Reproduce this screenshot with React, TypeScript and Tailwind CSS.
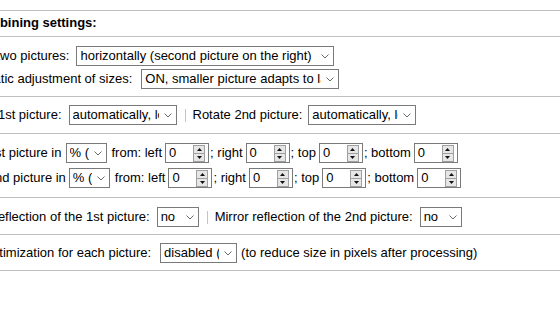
import React from "react";

const Chevron = () => (
  <svg width="8" height="5" viewBox="0 0 8 5" className="block">
    <path d="M0.5 0.5 L4 4 L7.5 0.5" stroke="#6b6b6b" fill="none" strokeWidth="1" />
  </svg>
);

function Sel({ cls, text }: { cls: string; text: string }) {
  return (
    <div
      className={`flex h-[20px] shrink-0 items-center border border-[#7a7a7a] bg-white pl-[3px] ${cls}`}
    >
      <span className="mr-[3px] min-w-0 flex-1 overflow-hidden whitespace-nowrap leading-[18px]">{text}</span>
      <span className="flex w-[14px] shrink-0 justify-center pr-[2px]">
        <Chevron />
      </span>
    </div>
  );
}

function Spin({ cls }: { cls: string }) {
  return (
    <div
      className={`flex h-[20px] w-[44px] shrink-0 items-center border border-[#7a7a7a] bg-white pl-[3px] ${cls}`}
    >
      <span className="flex-1 leading-[18px]">0</span>
      <div className="mr-[3px] flex h-[17px] w-[12px] flex-col border border-[#a0a0a0] bg-[#e6e6e6]">
        <div className="flex flex-1 items-center justify-center">
          <svg width="5" height="3" viewBox="0 0 5 3" className="block">
            <polygon points="0,3 2.5,0 5,3" fill="#111" />
          </svg>
        </div>
        <div className="h-px bg-[#a0a0a0]" />
        <div className="flex flex-1 items-center justify-center">
          <svg width="5" height="3" viewBox="0 0 5 3" className="block">
            <polygon points="0,0 5,0 2.5,3" fill="#111" />
          </svg>
        </div>
      </div>
    </div>
  );
}

const Sep = ({ cls }: { cls: string }) => (
  <div className={`h-[13px] w-px shrink-0 bg-[#c4c4c4] ${cls}`} />
);

export default function App() {
  return (
    <div className="h-[309px] w-[560px] overflow-hidden bg-white pt-[10px] font-['Liberation_Sans',Arial,sans-serif] text-[13px] text-black">
      {/* header */}
      <div className="flex h-[26px] items-center border-t border-[#c0c0c0] pb-[2px]">
        <div className="-ml-[29px] whitespace-nowrap font-bold">Combining settings:</div>
      </div>

      {/* arrangement */}
      <div className="flex flex-col gap-[3px] border-t border-[#c0c0c0] pb-[7px] pt-[9px]">
        <div className="-ml-[44px] flex h-[20px] items-center whitespace-nowrap">
          <span>Merge two pictures:</span>
          <Sel cls="ml-[7px] w-[258px]" text="horizontally (second picture on the right)" />
        </div>
        <div className="-ml-[44px] flex h-[20px] items-center whitespace-nowrap">
          <span>Automatic adjustment of sizes:</span>
          <Sel cls="ml-[9px] w-[198px]" text="ON, smaller picture adapts to larger" />
        </div>
      </div>

      {/* rotate */}
      <div className="border-t border-[#c0c0c0] pb-[8px] pt-[8px]">
        <div className="-ml-[44px] flex h-[20px] items-center whitespace-nowrap">
          <span>Rotate 1st picture:</span>
          <Sel cls="ml-[7px] w-[108px]" text="automatically, lossless" />
          <Sep cls="ml-[8px] mr-[7px]" />
          <span>Rotate 2nd picture:</span>
          <Sel cls="ml-[6px] w-[108px]" text="automatically, lossless" />
        </div>
      </div>

      {/* crop */}
      <div className="flex flex-col gap-[5px] border-t border-[#c0c0c0] pb-[9px] pt-[9px]">
        <div className="-ml-[44px] flex h-[20px] items-center whitespace-nowrap">
          <span>Crop 1st picture in</span>
          <Sel cls="ml-[4px] w-[41px]" text="% (percent)" />
          <span className="ml-[5px]">from: left</span>
          <Spin cls="ml-[3px]" />
          <span className="ml-[1px]">; right</span>
          <Spin cls="ml-[3px]" />
          <span className="ml-[1px]">; top</span>
          <Spin cls="ml-[3px]" />
          <span className="ml-[1px]">; bottom</span>
          <Spin cls="ml-[3px]" />
        </div>
        <div className="-ml-[44px] flex h-[20px] items-center whitespace-nowrap">
          <span>Crop 2nd picture in</span>
          <Sel cls="ml-[3px] w-[41px]" text="% (percent)" />
          <span className="ml-[5px]">from: left</span>
          <Spin cls="ml-[3px]" />
          <span className="ml-[1px]">; right</span>
          <Spin cls="ml-[3px]" />
          <span className="ml-[1px]">; top</span>
          <Spin cls="ml-[3px]" />
          <span className="ml-[1px]">; bottom</span>
          <Spin cls="ml-[3px]" />
        </div>
      </div>

      {/* mirror */}
      <div className="border-t border-[#c0c0c0] pb-[7px] pt-[9px]">
        <div className="-ml-[44px] flex h-[20px] items-center whitespace-nowrap">
          <span>Mirror reflection of the 1st picture:</span>
          <Sel cls="ml-[7px] w-[42px]" text="no" />
          <Sep cls="ml-[8px] mr-[7px]" />
          <span>Mirror reflection of the 2nd picture:</span>
          <Sel cls="ml-[7px] w-[42px]" text="no" />
        </div>
      </div>

      {/* optimization */}
      <div className="border-t border-[#c0c0c0] pb-[7px] pt-[8px]">
        <div className="-ml-[44px] flex h-[20px] items-center whitespace-nowrap">
          <span>Size optimization for each picture:</span>
          <Sel cls="ml-[9px] w-[77px]" text="disabled (default)" />
          <span className="ml-[4px]">(to reduce size in pixels after processing)</span>
        </div>
      </div>

      <div className="border-t border-[#c0c0c0]" />
    </div>
  );
}
